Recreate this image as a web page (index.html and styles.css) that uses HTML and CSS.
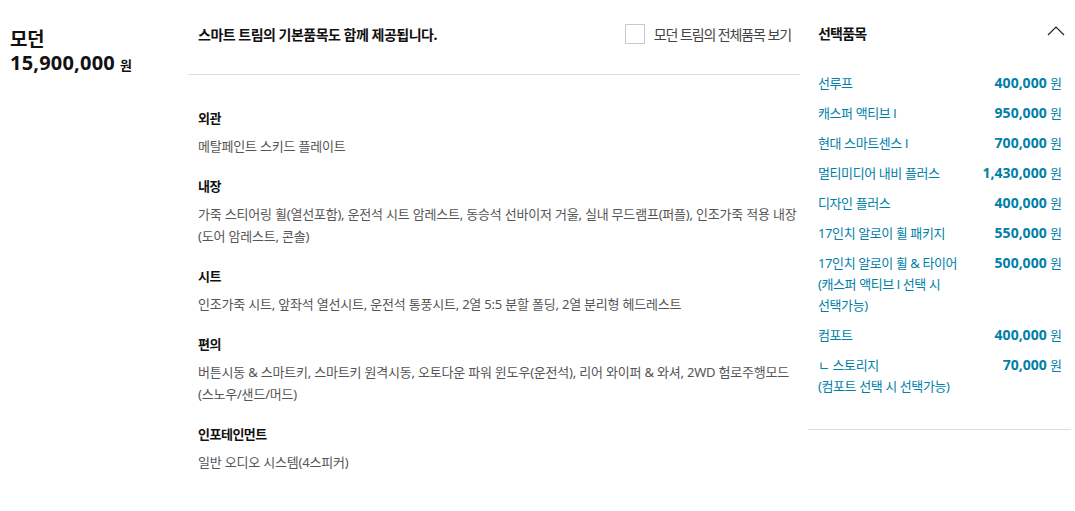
FILE: index.html
```html
<!DOCTYPE html>
<html lang="ko">
<head>
<meta charset="utf-8">
<link rel="stylesheet" href="styles.css">
</head>
<body>
<div class="page">
  <aside class="trim">
    <h1 class="trim-name">모던</h1>
    <div class="trim-price"><span class="num">15,900,000</span><span class="won">원</span></div>
  </aside>

  <main class="basic">
    <header class="basic-head">
      <p class="basic-title">스마트 트림의 기본품목도 함께 제공됩니다.</p>
      <label class="check">
        <span class="box"></span>
        <span class="check-label">모던 트림의 전체품목 보기</span>
      </label>
    </header>
    <div class="spec-list">
      <section class="spec">
        <h3>외관</h3>
        <p>메탈페인트 스키드 플레이트</p>
      </section>
      <section class="spec">
        <h3>내장</h3>
        <p>가죽 스티어링 휠(열선포함), 운전석 시트 암레스트, 동승석 선바이저 거울, 실내 무드램프(퍼플), 인조가죽 적용 내장 (도어 암레스트, 콘솔)</p>
      </section>
      <section class="spec">
        <h3>시트</h3>
        <p>인조가죽 시트, 앞좌석 열선시트, 운전석 통풍시트, 2열 5:5 분할 폴딩, 2열 분리형 헤드레스트</p>
      </section>
      <section class="spec">
        <h3>편의</h3>
        <p>버튼시동 &amp; 스마트키, 스마트키 원격시동, 오토다운 파워 윈도우(운전석), 리어 와이퍼 &amp; 와셔, 2WD 험로주행모드 (스노우/샌드/머드)</p>
      </section>
      <section class="spec">
        <h3>인포테인먼트</h3>
        <p>일반 오디오 시스템(4스피커)</p>
      </section>
    </div>
  </main>

  <aside class="options">
    <header class="opt-head">
      <h2>선택품목</h2>
      <svg class="chev" width="18" height="11" viewBox="0 0 18 11" aria-hidden="true"><path d="M1 10 L9 2 L17 10" fill="none" stroke="#222" stroke-width="1.2"/></svg>
    </header>
    <ul class="opt-list">
      <li><span class="opt-name">선루프</span><span class="opt-price"><b>400,000</b> 원</span></li>
      <li><span class="opt-name">캐스퍼 액티브 <i class="bar">I</i></span><span class="opt-price"><b>950,000</b> 원</span></li>
      <li><span class="opt-name">현대 스마트센스 <i class="bar">I</i></span><span class="opt-price"><b>700,000</b> 원</span></li>
      <li><span class="opt-name">멀티미디어 내비 플러스</span><span class="opt-price"><b>1,430,000</b> 원</span></li>
      <li><span class="opt-name">디자인 플러스</span><span class="opt-price"><b>400,000</b> 원</span></li>
      <li><span class="opt-name">17인치 알로이 휠 패키지</span><span class="opt-price"><b>550,000</b> 원</span></li>
      <li><span class="opt-name">17인치 알로이 휠 &amp; 타이어 (캐스퍼 액티브 <i class="bar">I</i> 선택 시 선택가능)</span><span class="opt-price"><b>500,000</b> 원</span></li>
      <li><span class="opt-name">컴포트</span><span class="opt-price"><b>400,000</b> 원</span></li>
      <li><span class="opt-name">ㄴ 스토리지<br>(컴포트 선택 시 선택가능)</span><span class="opt-price"><b>70,000</b> 원</span></li>
    </ul>
  </aside>
</div>
</body>
</html>
```

FILE: styles.css
```css
* { box-sizing: border-box; }
html, body { margin: 0; padding: 0; background: #fff; }
body {
  font-family: "Noto Sans", "Noto Sans CJK KR", sans-serif;
  color: #111;
  word-break: keep-all;
}
h1, h2, h3, p, ul { margin: 0; padding: 0; }
ul { list-style: none; }

.page {
  display: flex;
  align-items: flex-start;
  width: 1075px;
}

/* left trim column */
.trim {
  flex: 0 0 188px;
  padding: 26px 0 0 10px;
}
.trim-name {
  font-size: 19px;
  font-weight: 700;
  line-height: 27px;
  letter-spacing: -0.5px;
}
.trim-price {
  display: flex;
  align-items: baseline;
  gap: 5px;
  line-height: 20px;
}
.trim-price .num { font-size: 20px; font-weight: 700; letter-spacing: 0.2px; }
.trim-price .won { font-size: 13px; font-weight: 700; }

/* middle basic items */
.basic {
  flex: 0 0 612px;
}
.basic-head {
  height: 75px;
  border-bottom: 1px solid #ddd;
  display: flex;
  align-items: center;
  justify-content: space-between;
  padding: 0 9px 6px 10px;
}
.basic-title {
  font-size: 14px;
  font-weight: 700;
  letter-spacing: -0.5px;
  color: #111;
}
.check {
  display: flex;
  align-items: center;
  gap: 9px;
}
.box {
  width: 20px;
  height: 20px;
  border: 1px solid #c8c8c8;
  background: #fff;
}
.check-label {
  font-size: 14px;
  color: #444;
  letter-spacing: -1.1px;
}
.spec-list {
  padding: 33px 0 0 10px;
}
.spec { margin-bottom: 19px; }
.spec h3 {
  font-size: 13px;
  font-weight: 700;
  line-height: 20px;
  letter-spacing: -0.5px;
  color: #111;
  margin-bottom: 7px;
}
.spec p {
  font-size: 13px;
  line-height: 22px;
  color: #555;
  letter-spacing: -0.2px;
}

/* right options */
.options {
  flex: 0 0 263px;
  margin-left: 8px;
  border-bottom: 1px solid #ddd;
}
.opt-head {
  height: 66px;
  display: flex;
  align-items: center;
  justify-content: space-between;
  padding: 0 6px 0 10px;
}
.opt-head h2 {
  font-size: 14px;
  font-weight: 700;
  letter-spacing: -0.8px;
}
.chev { display: block; margin-top: -5px; }
.opt-list {
  padding: 7px 9px 32px 10px;
}
.opt-list li {
  display: flex;
  justify-content: space-between;
  align-items: flex-start;
  gap: 10px;
  line-height: 21px;
  margin-bottom: 9px;
  color: #007fa8;
}
.opt-list li:last-child { margin-bottom: 0; }
.opt-name {
  max-width: 155px;
  font-size: 13px;
  letter-spacing: -0.4px;
}
.bar {
  font-style: normal;
  font-family: "Liberation Sans", sans-serif;
  font-size: 12px;
  line-height: 1;
}
.opt-price {
  display: block;
  height: 21px;
  font-size: 13px;
  line-height: 21px;
  white-space: nowrap;
}
.opt-price b {
  font-size: 14px;
  font-weight: 700;
  line-height: 1;
}
```
